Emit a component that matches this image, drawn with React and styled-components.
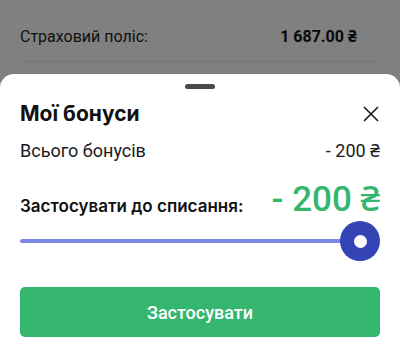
import React, { useState } from "react";
import styled, { createGlobalStyle } from "styled-components";

const GlobalStyle = createGlobalStyle`
  html, body {
    margin: 0;
    padding: 0;
    width: 400px;
    height: 341px;
    overflow: hidden;
    background: #808080;
    font-family: Roboto, "Noto Sans", sans-serif;
  }
`;

const Page = styled.div`
  position: relative;
  width: 400px;
  height: 341px;
  background: #808080;
  padding: 0 20px;
  box-sizing: border-box;
`;

const PolicyRow = styled.div`
  display: flex;
  justify-content: space-between;
  align-items: center;
  height: 62px;
  box-sizing: border-box;
  padding: 27px 23px 16px 0;
  border-bottom: 1px solid #767676;
  font-size: 16px;
  line-height: 19px;
  color: #101010;
`;

const PolicyValue = styled.span`
  font-weight: 700;
  font-size: 16px;
  color: #080808;
`;

const Sheet = styled.div`
  position: absolute;
  left: 0;
  right: 0;
  bottom: 0;
  height: 267px;
  background: #fff;
  border-radius: 14px 14px 0 0;
  padding: 10px 20px 0;
  box-sizing: border-box;
  display: flex;
  flex-direction: column;
`;

const Handle = styled.div`
  align-self: center;
  width: 30px;
  height: 5px;
  border-radius: 3px;
  background: #4a4a4a;
`;

const Header = styled.div`
  display: flex;
  justify-content: space-between;
  align-items: center;
  height: 24px;
  margin-top: 13px;
`;

const Title = styled.h2`
  margin: 0;
  font-family: Inter, Roboto, sans-serif;
  font-size: 21px;
  line-height: 24px;
  font-weight: 700;
  color: #111;
`;

const CloseButton = styled.button`
  border: 0;
  background: none;
  padding: 0;
  width: 18px;
  height: 18px;
  display: flex;
  cursor: pointer;
`;

const Row = styled.div`
  display: flex;
  justify-content: space-between;
  align-items: ${(p) => (p.$bottom ? "flex-end" : "center")};
  margin-top: ${(p) => p.$gap}px;
`;

const Label = styled.span`
  font-size: 18px;
  line-height: 22px;
  color: #1a1a1a;
`;

const StrongLabel = styled.span`
  font-family: Inter, Roboto, sans-serif;
  font-size: 17px;
  line-height: 20px;
  font-weight: 600;
  color: #111;
  margin-bottom: 4px;
`;

const Amount = styled.span`
  font-size: 35px;
  line-height: 40px;
  font-weight: 500;
  color: #34b66f;
`;

const SliderWrap = styled.div`
  position: relative;
  height: 40px;
  margin-top: 1px;
  display: flex;
  align-items: center;
`;

const Track = styled.div`
  flex: 1;
  height: 4px;
  border-radius: 2px;
  background: #7b86e2;
  margin-right: 20px;
`;

const Thumb = styled.div`
  position: absolute;
  top: 0;
  width: 40px;
  height: 40px;
  margin-left: -20px;
  border-radius: 50%;
  background: #3544b5;
  display: flex;
  align-items: center;
  justify-content: center;

  &::after {
    content: "";
    width: 13px;
    height: 13px;
    border-radius: 50%;
    background: #fff;
  }
`;

const ApplyButton = styled.button`
  margin-top: 26px;
  height: 50px;
  border: 0;
  border-radius: 5px;
  background: #34b66f;
  color: #fff;
  font-family: Roboto, sans-serif;
  font-size: 18px;
  font-weight: 500;
  cursor: pointer;
`;

export default function App() {
  const [value] = useState(200);
  const max = 200;
  const thumbLeft = (value / max) * 340;

  return (
    <>
      <GlobalStyle />
      <Page>
        <PolicyRow>
          <span>Страховий поліс:</span>
          <PolicyValue>1 687.00 ₴</PolicyValue>
        </PolicyRow>
        <Sheet>
          <Handle />
          <Header>
            <Title>Мої бонуси</Title>
            <CloseButton aria-label="close">
              <svg width="18" height="18" viewBox="0 0 18 18">
                <path d="M2 2 L16 16 M16 2 L2 16" stroke="#1a1a1a" strokeWidth="1.6" />
              </svg>
            </CloseButton>
          </Header>
          <Row $gap={14}>
            <Label>Всього бонусів</Label>
            <Label>- {value} ₴</Label>
          </Row>
          <Row $gap={18} $bottom>
            <StrongLabel>Застосувати до списання:</StrongLabel>
            <Amount>- {value} ₴</Amount>
          </Row>
          <SliderWrap>
            <Track />
            <Thumb style={{ left: thumbLeft }} />
          </SliderWrap>
          <ApplyButton>Застосувати</ApplyButton>
        </Sheet>
      </Page>
    </>
  );
}
